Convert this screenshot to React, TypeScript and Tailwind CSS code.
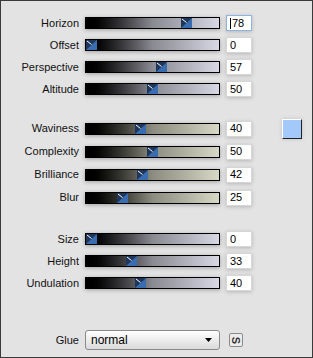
import React from "react";

type Row = { label: string; value: number; focus?: boolean };

const font = { fontFamily: '"Liberation Sans", Arial, sans-serif' };

function Thumb() {
  return (
    <svg width="11" height="10" viewBox="0 0 11 10" className="block">
      <rect x="0" y="0" width="11" height="10" fill="#1d3659" />
      <polygon points="11,0 11,10 0,10" fill="#3a6db0" />
      <line x1="1" y1="1" x2="5.5" y2="4.5" stroke="#ffffff" strokeWidth="1" />
    </svg>
  );
}

function Slider({ value, tone }: { value: number; tone: "cool" | "warm" }) {
  const left = Math.round((value / 100) * 122);
  return (
    <div
      className={
        "relative w-[135px] h-[12px] border border-black shadow-[0_1px_4px_rgba(0,0,0,0.3)] " +
        (tone === "cool"
          ? "bg-gradient-to-r from-black via-[#8a8a92] to-[#d8d8e6]"
          : "bg-gradient-to-r from-black via-[#8c8c80] to-[#d8d8c6]")
      }
    >
      <div className="absolute top-0" style={{ left }}>
        <Thumb />
      </div>
    </div>
  );
}

function SliderRow({ row, tone, h, extra }: { row: Row; tone: "cool" | "warm"; h: string; extra?: React.ReactNode }) {
  return (
    <div className={"flex items-center " + h}>
      <div className="w-[78px] text-right text-[11px] text-[#111]">{row.label}</div>
      <div className="ml-[6px]">
        <Slider value={row.value} tone={tone} />
      </div>
      <div
        className={
          "ml-[6px] w-[26px] h-[16px] bg-white flex items-center pl-[3px] text-[11px] text-black shadow-[0_1px_4px_rgba(0,0,0,0.2)] border " +
          (row.focus ? "border-[#8fb4e0]" : "border-[#d6d6d6]")
        }
      >
        {row.focus && <span className="w-px h-[11px] bg-black mr-px" />}
        {row.value}
      </div>
      {extra}
    </div>
  );
}

const group1: Row[] = [
  { label: "Horizon", value: 78, focus: true },
  { label: "Offset", value: 0 },
  { label: "Perspective", value: 57 },
  { label: "Altitude", value: 50 },
];

const group2: Row[] = [
  { label: "Waviness", value: 40 },
  { label: "Complexity", value: 50 },
  { label: "Brilliance", value: 42 },
  { label: "Blur", value: 25 },
];

const group3: Row[] = [
  { label: "Size", value: 0 },
  { label: "Height", value: 33 },
  { label: "Undulation", value: 40 },
];

export default function App() {
  return (
    <div className="w-[313px] h-[358px] border border-[#3a3a3a] bg-[#e3e3e3] pt-[11px]" style={font}>
      {/* top group */}
      <div>
        {group1.map((r) => (
          <SliderRow key={r.label} row={r} tone="cool" h="h-[22px]" />
        ))}
      </div>

      {/* middle group with colour swatch */}
      <div className="mt-[17px]">
        {group2.map((r, i) => (
          <SliderRow
            key={r.label}
            row={r}
            tone="warm"
            h="h-[23px]"
            extra={
              i === 0 ? (
                <div className="ml-[30px] w-[20px] h-[20px] bg-[#a2c9fa] border border-t-white border-l-white border-r-[#222] border-b-[#222] shadow-[0_0_4px_rgba(0,0,0,0.15)]" />
              ) : null
            }
          />
        ))}
      </div>

      {/* bottom group */}
      <div className="mt-[19px]">
        {group3.map((r) => (
          <SliderRow key={r.label} row={r} tone="cool" h="h-[22px]" />
        ))}
      </div>

      {/* glue */}
      <div className="mt-[35px] flex items-center h-[22px]">
        <div className="w-[78px] text-right text-[11px] text-[#111]">Glue</div>
        <div className="ml-[6px] w-[135px] h-[20px] rounded-[3px] border border-[#8a8a8a] bg-gradient-to-b from-white to-[#dadada] flex items-center justify-between pl-[5px] pr-[7px] text-[12px] text-black">
          <span>normal</span>
          <svg width="7" height="4" viewBox="0 0 7 4">
            <polygon points="0,0 7,0 3.5,4" fill="#000" />
          </svg>
        </div>
        <div className="ml-[9px] w-[14px] h-[14px] rounded-[2px] border border-[#8a8a8a] bg-[#ececec] flex items-center justify-center">
          <span className="text-[11px] font-bold text-[#333] rotate-90 leading-none">S</span>
        </div>
      </div>
    </div>
  );
}
